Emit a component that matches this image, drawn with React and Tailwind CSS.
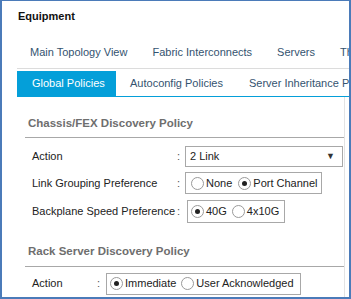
import React from "react";

const Radio = ({ checked }) => (
  <span className="inline-flex items-center justify-center w-[13px] h-[13px] rounded-full border border-[#9a9a9a] bg-white shrink-0">
    {checked && <span className="w-[5px] h-[5px] rounded-full bg-[#222]" />}
  </span>
);

const Row = ({ label, labelW, colonW = "8px", children, className = "" }) => (
  <div className={"flex items-center h-[22px] " + className}>
    <div className="text-[11px] text-[#222] shrink-0" style={{ width: labelW }}>{label}</div>
    <div className="text-[11px] text-[#555] shrink-0" style={{ width: colonW }}>:</div>
    {children}
  </div>
);

export default function App() {
  return (
    <div
      className="w-[351px] h-[299px] bg-white border-2 border-t border-[#4b7bb9] overflow-hidden flex flex-col"
      style={{ fontFamily: '"Liberation Sans", Arial, sans-serif' }}
    >
      <div className="pl-[16px] pt-[7px] h-[36px] text-[11px] font-bold text-[#111] shrink-0">Equipment</div>
      <div className="ml-[15px] h-[32px] flex items-center border-b border-[#dcdcdc] text-[11px] text-[#34536f] whitespace-nowrap shrink-0">
        <span className="px-[13px] shrink-0">Main Topology View</span>
        <span className="px-[12px] shrink-0">Fabric Interconnects</span>
        <span className="px-[13px] shrink-0">Servers</span>
        <span className="px-[12px] shrink-0">Thermal</span>
      </div>
      <div className="ml-[15px] mt-[2px] h-[26px] flex items-stretch border-b border-[#049fd9] text-[11px] text-[#34536f] whitespace-nowrap shrink-0">
        <span className="w-[99px] shrink-0 bg-[#049fd9] text-white flex items-center pl-[15px]">Global Policies</span>
        <span className="px-[14px] shrink-0 flex items-center">Autoconfig Policies</span>
        <span className="px-[12px] shrink-0 flex items-center">Server Inheritance Policies</span>
      </div>
      <div className="ml-[15px] mr-[4px] flex-1 border-r border-[#e3e3e3] flex flex-col">
        <div className="ml-[8px] pl-[3px] mt-[18px] pb-[5px] border-b border-[#a8a8a8] text-[11.5px] font-bold text-[#6e6e6e]">
          Chassis/FEX Discovery Policy
        </div>
        <div className="pl-[15px] mt-[7px] flex flex-col gap-[5px]">
          <Row label="Action" labelW="145px">
            <div className="w-[158px] h-[21px] border border-[#a8a8a8] flex items-center justify-between pl-[4px] pr-[7px] text-[11px] text-[#222]">
              <span>2 Link</span>
              <span className="text-[9px] text-[#333]">▼</span>
            </div>
          </Row>
          <Row label="Link Grouping Preference" labelW="145px">
            <div className="h-[22px] border border-[#a8a8a8] flex items-center pl-[5px] pr-[3px] text-[11px] text-[#222] gap-[2px]">
              <Radio />
              <span className="mr-[4px]">None</span>
              <Radio checked />
              <span>Port Channel</span>
            </div>
          </Row>
          <Row label="Backplane Speed Preference" labelW="145px" className="mt-[1px]">
            <div className="h-[23px] ml-[2px] border border-[#a8a8a8] flex items-center pl-[3px] pr-[5px] text-[11px] text-[#222] gap-[2px]">
              <Radio checked />
              <span className="mr-[3px]">40G</span>
              <Radio />
              <span>4x10G</span>
            </div>
          </Row>
        </div>
        <div className="ml-[8px] pl-[3px] mt-[21px] pb-[5px] border-b border-[#a8a8a8] text-[11.5px] font-bold text-[#6e6e6e]">
          Rack Server Discovery Policy
        </div>
        <div className="pl-[15px] mt-[6px]">
          <Row label="Action" labelW="65px" colonW="9px">
            <div className="h-[22px] border border-[#a8a8a8] flex items-center pl-[3px] pr-[6px] text-[11px] text-[#222] gap-[2px]">
              <Radio checked />
              <span className="mr-[3px]">Immediate</span>
              <Radio />
              <span>User Acknowledged</span>
            </div>
          </Row>
        </div>
      </div>
    </div>
  );
}
